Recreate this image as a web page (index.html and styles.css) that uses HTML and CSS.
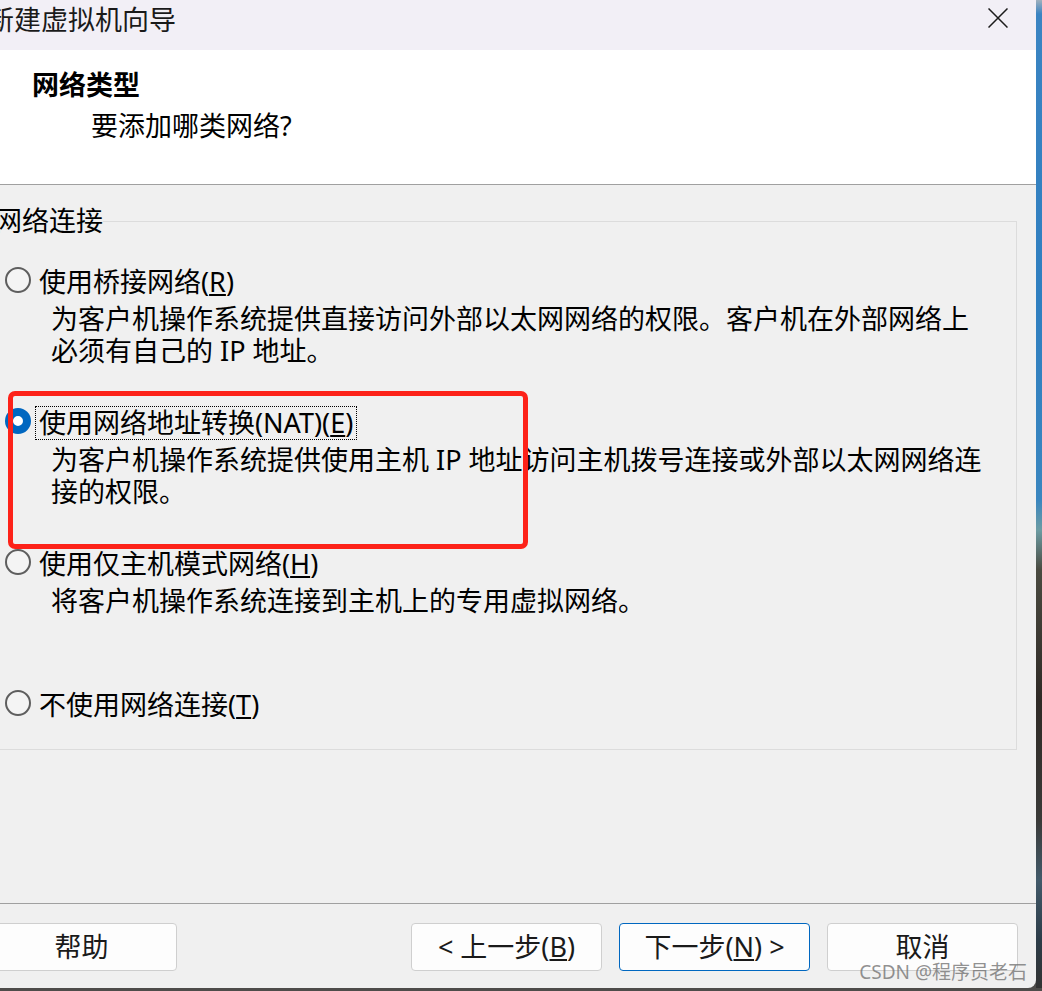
FILE: index.html
```html
<!DOCTYPE html>
<html lang="zh-CN">
<head>
<meta charset="utf-8">
<title>新建虚拟机向导</title>
<link rel="stylesheet" href="styles.css">
</head>
<body>
<div class="screen">
  <div class="window">
    <div class="titlebar">
      <span class="title">新建虚拟机向导</span>
      <svg class="close" width="20" height="20" viewBox="0 0 20 20"><path d="M0.5 0.5 L19.5 19.5 M19.5 0.5 L0.5 19.5" stroke="#1c1c1c" stroke-width="1.5" fill="none"/></svg>
    </div>
    <div class="header">
      <div class="h-title">网络类型</div>
      <div class="h-sub">要添加哪类网络?</div>
    </div>
    <div class="content">
      <fieldset class="group">
        <legend>网络连接</legend>
        <div class="options">
          <div class="option">
            <div class="opt-row"><span class="radio"></span><span class="label">使用桥接网络(<u>R</u>)</span></div>
            <div class="desc">为客户机操作系统提供直接访问外部以太网网络的权限。客户机在外部网络上<br>必须有自己的 IP 地址。</div>
          </div>
          <div class="option">
            <div class="opt-row"><span class="radio checked"></span><span class="label focus">使用网络地址转换(NAT)(<u>E</u>)</span></div>
            <div class="desc">为客户机操作系统提供使用主机 IP 地址访问主机拨号连接或外部以太网网络连<br>接的权限。</div>
          </div>
          <div class="option">
            <div class="opt-row"><span class="radio"></span><span class="label">使用仅主机模式网络(<u>H</u>)</span></div>
            <div class="desc">将客户机操作系统连接到主机上的专用虚拟网络。</div>
          </div>
          <div class="option last">
            <div class="opt-row"><span class="radio"></span><span class="label">不使用网络连接(<u>T</u>)</span></div>
          </div>
        </div>
      </fieldset>
      <div class="annot"></div>
    </div>
    <div class="footer">
      <button class="btn help">帮助</button>
      <div class="nav">
        <button class="btn">&lt; 上一步(<u>B</u>)</button>
        <button class="btn default">下一步(<u>N</u>) &gt;</button>
        <button class="btn">取消</button>
      </div>
      <span class="watermark">CSDN @程序员老石</span>
    </div>
  </div>
  <div class="desktop"></div>
</div>
</body>
</html>
```
FILE: styles.css
```css
html, body {
  margin: 0;
  padding: 0;
}
body {
  width: 1042px;
  height: 991px;
  overflow: hidden;
  background: #4e4c4a;
  font-family: "Noto Sans", "Noto Sans CJK SC", sans-serif;
  color: #000;
}
.screen {
  display: flex;
  height: 988px;
}
.window {
  width: 1036px;
  height: 988px;
  display: flex;
  flex-direction: column;
  background: #f0f0f0;
  border-bottom-right-radius: 8px;
  overflow: hidden;
  position: relative;
}
.desktop {
  flex: 1;
  background: linear-gradient(to bottom, #9fb0bd 0px, #3b84c2 14px, #2f7fc0 300px, #3a86bf 500px, #6c9ca3 530px, #4a4a40 570px, #2f2a26 700px, #3a3a38 820px, #425a6a 880px, #2c3c48 940px, #333 988px);
}
.titlebar {
  height: 50px;
  flex: none;
  background: #f2eff6;
  display: flex;
  align-items: flex-start;
  box-sizing: border-box;
  padding-top: 5px;
  padding-right: 28px;
}
.title {
  margin-left: -13px;
  font-size: 27px;
  line-height: 30px;
  color: #1a1a1a;
}
.close {
  margin-left: auto;
  margin-top: 3px;
}
.header {
  height: 134px;
  flex: none;
  background: #fff;
  border-bottom: 1px solid #a0a0a0;
  box-sizing: content-box;
  padding-left: 32px;
}
.h-title {
  font-size: 27px;
  line-height: 30px;
  font-weight: 700;
  margin-top: 20px;
}
.h-sub {
  font-size: 27px;
  line-height: 30px;
  margin-top: 11px;
  margin-left: 59px;
}
.content {
  flex: 1;
  position: relative;
  padding-top: 23px;
}
.group {
  margin: 0 19px 0 -20px;
  border: 1px solid #dcdcdc;
  padding: 31px 0 27px 14px;
  min-width: 0;
}
.group legend {
  padding: 0;
  font-size: 27px;
  line-height: 26px;
  height: 26px;
}
.options {
  display: flex;
  flex-direction: column;
  gap: 39px;
}
.option {
  font-size: 27px;
  height: 102px;
}
.option.last {
  height: 34px;
}
.opt-row {
  display: flex;
  align-items: flex-start;
  height: 34px;
}
.radio {
  box-sizing: border-box;
  width: 26px;
  height: 26px;
  border-radius: 50%;
  border: 2px solid #5e5e5e;
  background: #f4f4f4;
  margin: 2px 4px 0 10px;
  flex: none;
}
.radio.checked {
  border: 8px solid #0067c0;
  background: #fff;
}
.label {
  line-height: 32px;
  padding: 0 3px;
  border: 1px solid transparent;
  white-space: nowrap;
}
.label.focus {
  border: 1px dotted #000;
}
.desc {
  margin: 4px 0 0 56px;
  line-height: 32px;
  white-space: nowrap;
}
.annot {
  position: absolute;
  left: 8px;
  top: 206px;
  width: 510px;
  height: 148px;
  border: 5px solid #fd2219;
  border-radius: 7px;
  pointer-events: none;
}
.footer {
  flex: none;
  border-top: 1px solid #a0a0a0;
  display: flex;
  align-items: flex-start;
  padding: 19px 18px 0 0;
  box-sizing: border-box;
  height: 85px;
  position: relative;
}
.btn {
  width: 191px;
  height: 48px;
  box-sizing: border-box;
  background: #fdfdfd;
  border: 1px solid #cfcfcf;
  border-radius: 4px;
  font-family: "Noto Sans", "Noto Sans CJK SC", sans-serif;
  font-size: 27px;
  line-height: 30px;
  color: #1a1a1a;
  padding: 0;
}
.btn.default {
  border-color: #0067c0;
}
.help {
  margin-left: -14px;
}
.nav {
  margin-left: auto;
  display: flex;
  gap: 17px;
}
.watermark {
  position: absolute;
  right: 9px;
  bottom: 4px;
  font-family: "Noto Sans", "Noto Sans CJK SC", sans-serif;
  font-size: 19px;
  line-height: 24px;
  color: rgba(110, 110, 110, 0.75);
  white-space: nowrap;
}
```
